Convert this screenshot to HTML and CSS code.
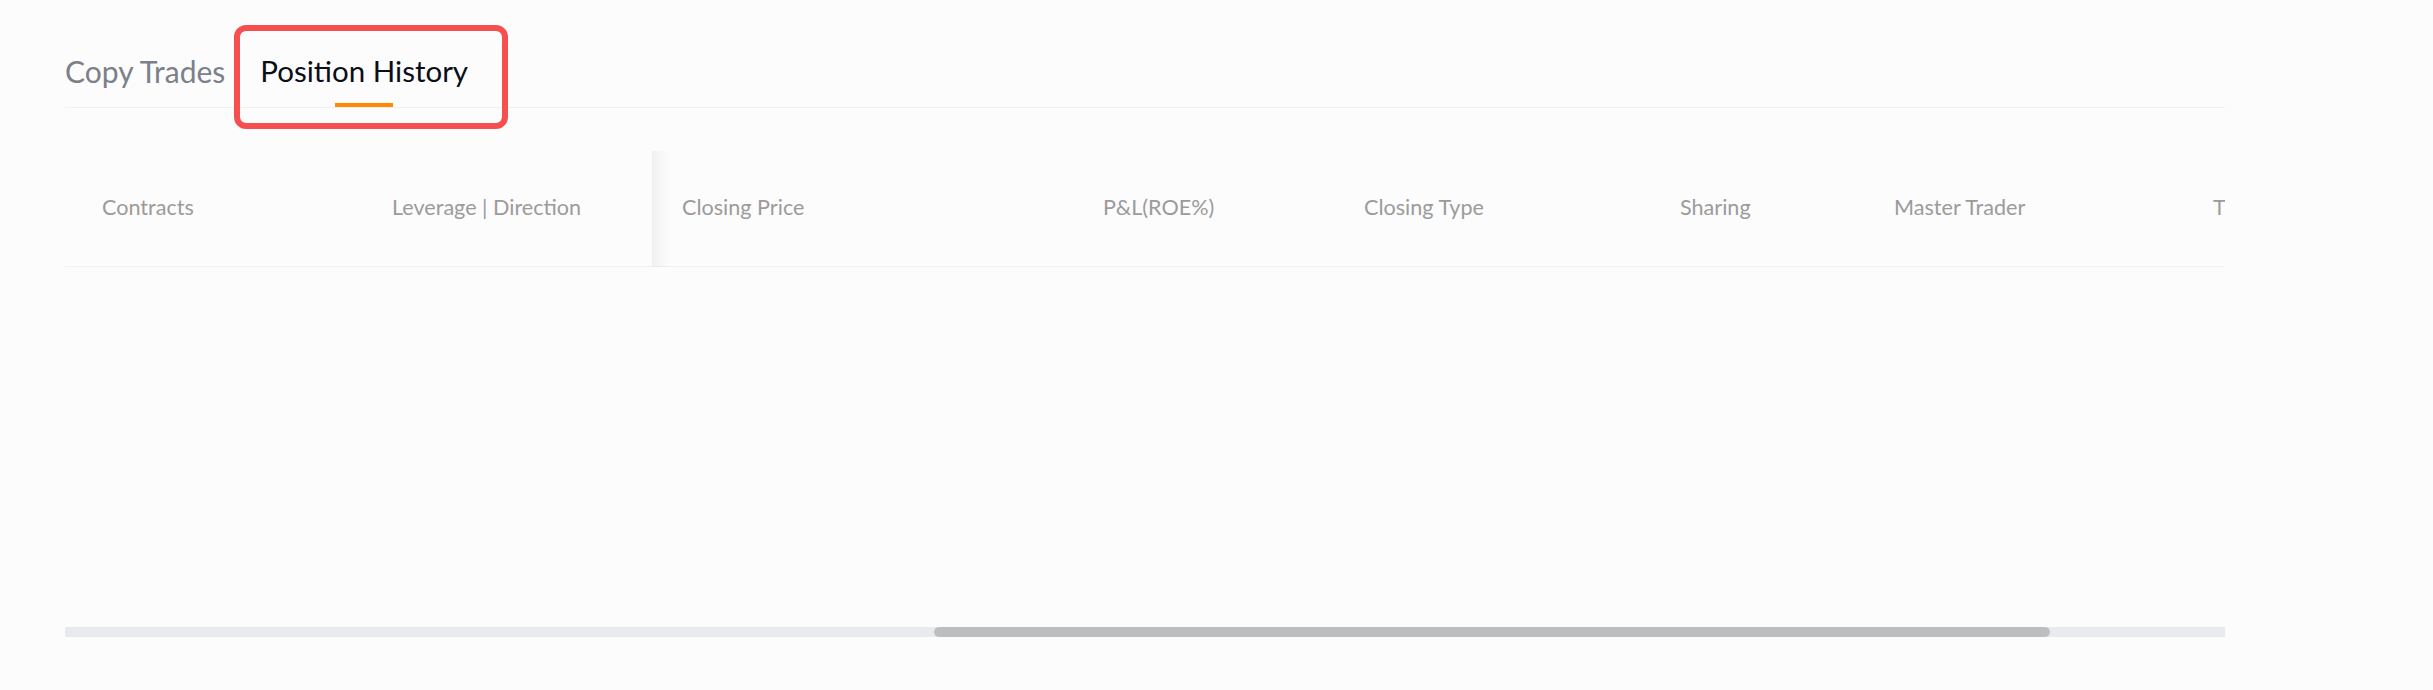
FILE: index.html
```html
<!DOCTYPE html>
<html lang="en">
<head>
  <meta charset="UTF-8">
  <title>Position History</title>
  <link rel="stylesheet" href="styles.css">
</head>
<body>
  <div class="container">
    <div class="tabs">
      <div class="tab">Copy Trades</div>
      <div class="tab active">Position History</div>
    </div>

    <div class="table">
      <div class="table-head">
        <div class="th">Contracts</div>
        <div class="th th-fixed">Leverage | Direction</div>
        <div class="th th-scroll">Closing Price</div>
        <div class="th th-scroll">P&amp;L(ROE%)</div>
        <div class="th th-scroll">Closing Type</div>
        <div class="th th-scroll">Sharing</div>
        <div class="th th-scroll">Master Trader</div>
        <div class="th th-scroll">Time Closed</div>
      </div>
      <div class="table-body"></div>
      <div class="scrollbar">
        <div class="scroll-thumb"></div>
      </div>
    </div>
  </div>
</body>
</html>
```

FILE: styles.css
```css
body {
  margin: 0;
  background-color: #fcfcfc;
  font-family: 'Lato', 'Liberation Sans', sans-serif;
}

.container {
  padding: 0 208px 0 65px;
}

.tabs {
  display: flex;
  gap: 35px;
  border-bottom: 1px solid #f0f0f0;
}

.tab {
  position: relative;
  display: flex;
  flex-direction: column;
  align-items: center;
  padding-top: 53px;
  font-size: 29.5px;
  line-height: 36px;
  color: #7b8089;
}

.tab:first-child {
  font-size: 30px;
}

.tab::before {
  content: "";
  display: block;
  order: 2;
  width: 58px;
  height: 4px;
  margin-top: 14px;
}

.tab.active {
  color: #0b0e17;
}

.tab.active::before {
  background-color: #ff8a00;
}

/* highlight box around the active tab */
.tab.active::after {
  content: "";
  position: absolute;
  left: -26px;
  right: -40px;
  top: 25px;
  bottom: -22px;
  border: 6px solid #f5504f;
  border-radius: 12px;
}

.table {
  margin-top: 43px;
  overflow: hidden;
}

.table-head {
  display: grid;
  grid-template-columns: 290px 297px 421px 261px 316px 214px 319px 300px;
  height: 115px;
  border-bottom: 1px solid #f1f1f1;
}

.th {
  display: flex;
  align-items: center;
  padding: 0 0 4px 37px;
  font-size: 21.6px;
  color: #9b9b9b;
  white-space: nowrap;
}

.th-fixed {
  position: relative;
}

.th-fixed::after {
  content: "";
  position: absolute;
  top: 0;
  bottom: -1px;
  left: 100%;
  width: 18px;
  background: linear-gradient(to right, rgba(0, 0, 0, 0.045), rgba(0, 0, 0, 0));
}

.th-scroll {
  padding-left: 30px;
}

.table-body {
  height: 360px;
}

.scrollbar {
  height: 10px;
  background-color: #e9eaee;
}

.scroll-thumb {
  width: 1116px;
  height: 100%;
  margin-left: 869px;
  border-radius: 5px;
  background-color: #bdbec0;
}
```
